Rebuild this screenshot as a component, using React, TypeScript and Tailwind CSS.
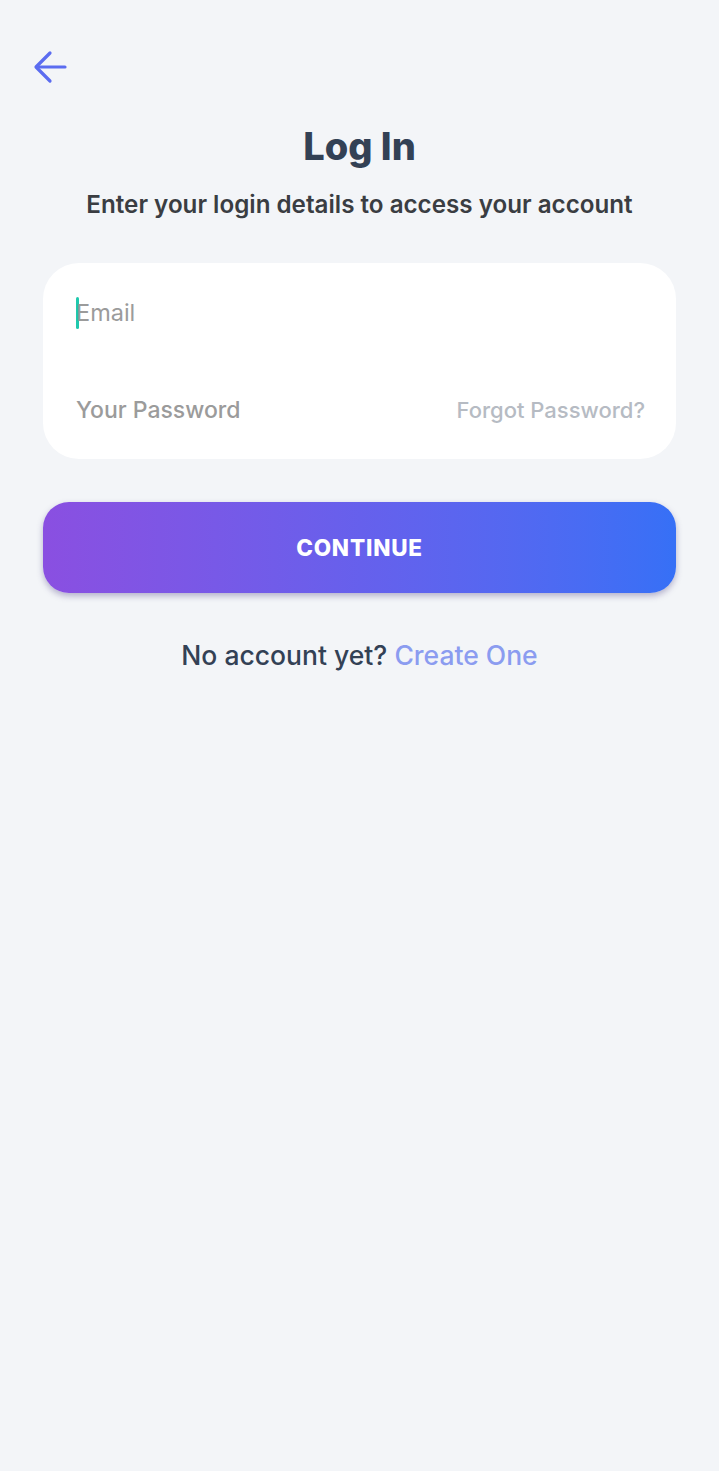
import React from 'react';

const font = { fontFamily: 'Inter, "Noto Sans", sans-serif' };

export default function App() {
  return (
    <div className="min-h-[1471px] w-full bg-[#f3f5f8] px-[43px]" style={font}>
      <div className="pt-[50px]">
        <button className="-ml-[12px] flex h-[34px] w-[40px] items-center justify-center text-[#5b6cf0]">
          <svg width="36" height="34" viewBox="0 0 36 34" fill="none" stroke="currentColor" strokeWidth="3.2" strokeLinecap="round" strokeLinejoin="round">
            <path d="M32 17H4" />
            <path d="M17 3L3 17l14 14" />
          </svg>
        </button>
      </div>

      <h1 className="mt-[40px] text-center text-[38px] font-extrabold leading-[44px] text-[#334155]">Log In</h1>
      <p className="mt-[22px] text-center text-[24.2px] font-semibold leading-[30px] text-[#3a3d42]">
        Enter your login details to access your account
      </p>

      <div className="mt-[43px] rounded-[36px] bg-white pb-[33px] pl-[33px] pr-[31px] pt-[34px]">
        <div className="flex h-[32px] items-center">
          <span className="h-[32px] w-[3px] rounded-sm bg-[#1fc9ad]" />
          <span className="-ml-[3px] text-[23.5px] text-[#9b9b9b]">Email</span>
        </div>
        <div className="mt-[65px] flex h-[32px] items-center justify-between">
          <span className="text-[23px] font-medium text-[#9b9b9b]">Your Password</span>
          <span className="text-[22px] font-medium text-[#b6bbc3]">Forgot Password?</span>
        </div>
      </div>

      <button className="mt-[43px] flex h-[91px] w-full items-center justify-center rounded-[26px] bg-gradient-to-r from-[#8a4fe1] via-[#6660ec] to-[#3670f6] text-[22.5px] font-extrabold tracking-[0.8px] text-white shadow-[0_3px_6px_rgba(60,50,120,0.35)]">
        CONTINUE
      </button>

      <p className="mt-[44px] text-center text-[26.5px] font-medium leading-[36px] text-[#334155]">
        No account yet? <span className="text-[#8b9cf0]">Create One</span>
      </p>
    </div>
  );
}
